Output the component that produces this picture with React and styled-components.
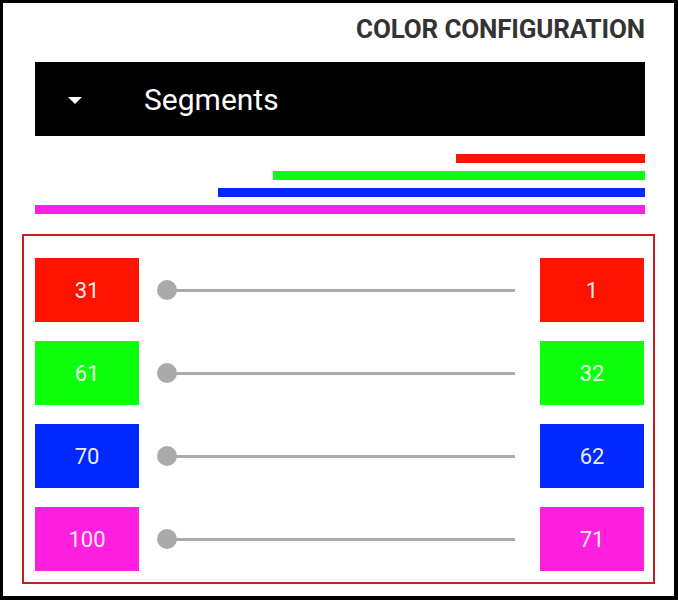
import React from 'react';
import styled, { createGlobalStyle } from 'styled-components';

const GlobalStyle = createGlobalStyle`
  html, body {
    margin: 0;
    padding: 0;
    background: #fff;
  }
  body {
    font-family: Roboto, "Liberation Sans", sans-serif;
  }
`;

const Frame = styled.div`
  box-sizing: border-box;
  width: 678px;
  height: 600px;
  border-style: solid;
  border-color: #000;
  border-width: 3px 4px 4px 3px;
  padding: 12px 29px 0 32px;
  display: flex;
  flex-direction: column;
`;

const Title = styled.h1`
  margin: 0;
  font-size: 26px;
  line-height: 28px;
  font-weight: 700;
  color: #333;
  text-align: right;
  letter-spacing: -0.15px;
`;

const Header = styled.div`
  margin-top: 19px;
  height: 74px;
  background: #000;
  display: flex;
  align-items: center;
  padding-left: 33px;
  color: #fff;
`;

const Caret = styled.span`
  width: 0;
  height: 0;
  border-left: 7px solid transparent;
  border-right: 7px solid transparent;
  border-top: 7px solid #fff;
  margin-right: 62px;
  margin-top: 2px;
`;

const HeaderLabel = styled.span`
  font-size: 30px;
  line-height: 1;
  margin-top: 2px;
`;

const Bars = styled.div`
  margin-top: 18px;
  display: flex;
  flex-direction: column;
  align-items: flex-end;
  gap: 8px;
`;

const Bar = styled.div`
  height: 9px;
  background: ${(p) => p.color};
`;

const Panel = styled.div`
  margin: 20px -10px 0 -13px;
  border: 2px solid #c81e1e;
  padding: 22px 9px 11px 11px;
  display: flex;
  flex-direction: column;
  gap: 19px;
`;

const Row = styled.div`
  display: grid;
  grid-template-columns: 104px 1fr 104px;
  height: 64px;
`;

const ValueBox = styled.div`
  background: ${(p) => p.color};
  color: rgba(255, 255, 255, 0.93);
  font-size: 22px;
  display: flex;
  align-items: center;
  justify-content: center;
`;

const Slider = styled.div`
  position: relative;
  margin: 0 25px 0 18px;
  display: flex;
  align-items: center;
`;

const Track = styled.div`
  flex: 1;
  height: 3px;
  margin-left: 10px;
  background: #aaa;
`;

const Thumb = styled.div`
  position: absolute;
  left: 0;
  top: 50%;
  width: 20px;
  height: 20px;
  margin-top: -10px;
  border-radius: 50%;
  background: #aaa;
`;

const segments = [
  { color: '#ff1200', end: 31, start: 1 },
  { color: '#0cff0c', end: 61, start: 32 },
  { color: '#0028ff', end: 70, start: 62 },
  { color: '#ff1fe0', end: 100, start: 71 },
];

export default function App() {
  return (
    <>
      <GlobalStyle />
      <Frame>
        <Title>COLOR CONFIGURATION</Title>
        <Header>
          <Caret />
          <HeaderLabel>Segments</HeaderLabel>
        </Header>
        <Bars>
          {segments.map((s) => (
            <Bar key={s.color} color={s.color} style={{ width: `${s.end}%` }} />
          ))}
        </Bars>
        <Panel>
          {segments.map((s) => (
            <Row key={s.color}>
              <ValueBox color={s.color}>{s.end}</ValueBox>
              <Slider>
                <Track />
                <Thumb />
              </Slider>
              <ValueBox color={s.color}>{s.start}</ValueBox>
            </Row>
          ))}
        </Panel>
      </Frame>
    </>
  );
}
